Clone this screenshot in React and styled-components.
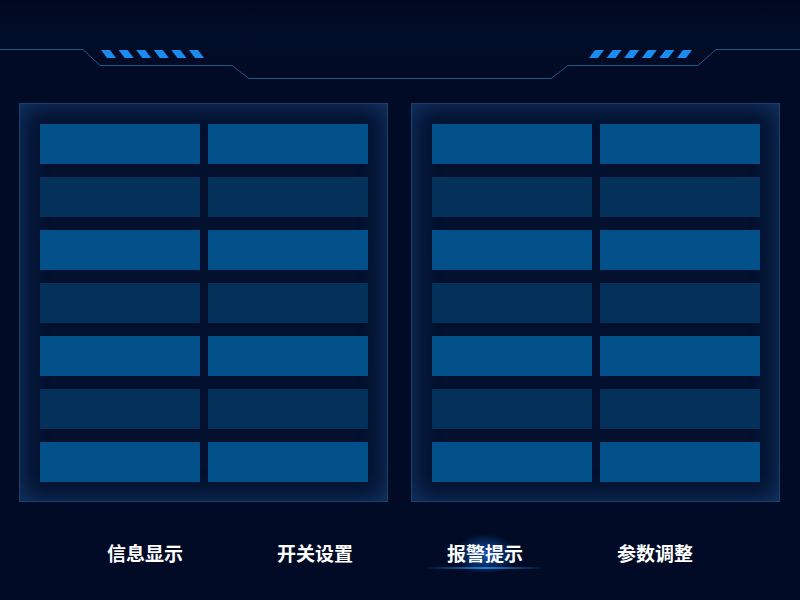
import React from "react";
import styled, { createGlobalStyle } from "styled-components";

const Global = createGlobalStyle`
  html, body { margin: 0; padding: 0; }
  body {
    background: #010b25;
    font-family: "Noto Sans CJK SC", "Noto Sans", sans-serif;
  }
`;

const Page = styled.div`
  width: 800px;
  height: 600px;
  overflow: hidden;
  display: flex;
  flex-direction: column;
  background: linear-gradient(to bottom, #000820 0px, #020f2b 48px, #010b25 49px, #010b25 100%);
`;

const Header = styled.div`
  height: 80px;
  flex: none;
`;

const HeaderSvg = styled.svg`
  display: block;
`;

const Panels = styled.div`
  display: flex;
  gap: 23px;
  padding: 23px 20px 0 19px;
`;

const Panel = styled.div`
  width: 369px;
  height: 399px;
  box-sizing: border-box;
  border: 1px solid #1d4066;
  background: #03112f;
  box-shadow: inset 0 0 26px rgba(34, 92, 160, 0.55);
  padding: 20px 20px 19px 20px;
  display: grid;
  grid-template-columns: 160px 160px;
  grid-template-rows: repeat(7, 40px);
  column-gap: 8px;
  row-gap: 13px;
  align-content: start;
`;

const Cell = styled.div`
  background: ${(p) => (p.$bright ? "#01508a" : "#03315a")};
`;

const Tabs = styled.div`
  display: flex;
  justify-content: center;
  margin-top: 28px;
`;

const Tab = styled.div`
  position: relative;
  width: 170px;
  height: 44px;
  display: flex;
  align-items: center;
  justify-content: center;
  color: #ffffff;
  font-size: 19px;
  font-weight: 700;
  z-index: 0;
  ${(p) =>
    p.$active &&
    `
    &::before {
      content: "";
      position: absolute;
      left: 30px; right: 30px; top: -4px; bottom: 2px;
      background: radial-gradient(ellipse 38% 60% at 50% 62%, rgba(24, 116, 230, 0.7), rgba(20, 110, 220, 0) 75%);
      z-index: -1;
    }
    &::after {
      content: "";
      position: absolute;
      left: 25px; right: 25px; bottom: 5px; height: 2px;
      background: linear-gradient(to right, rgba(30,130,230,0), #1c7fd8 50%, rgba(30,130,230,0));
    }
  `}
`;

const LINE = "#1c5a7c";
const STRIPE = "#1a8cf0";

function Stripes({ x, dir }) {
  const items = [];
  for (let i = 0; i < 6; i++) {
    const x0 = x + i * 17.6;
    const pts =
      dir === "left"
        ? `${x0},50 ${x0 + 9},50 ${x0 + 15},58 ${x0 + 6},58`
        : `${x0 + 6},50 ${x0 + 15},50 ${x0 + 9},58 ${x0},58`;
    items.push(<polygon key={i} points={pts} fill={STRIPE} />);
  }
  return <g>{items}</g>;
}

const rows = [true, false, true, false, true, false, true];

function PanelGrid() {
  return (
    <Panel>
      {rows.map((b, i) => (
        <React.Fragment key={i}>
          <Cell $bright={b} />
          <Cell $bright={b} />
        </React.Fragment>
      ))}
    </Panel>
  );
}

export default function App() {
  const tabs = ["信息显示", "开关设置", "报警提示", "参数调整"];
  return (
    <>
      <Global />
      <Page>
        <Header>
          <HeaderSvg width="800" height="80" viewBox="0 0 800 80">
            <polyline
              points="0,49.5 83,49.5 100,65.5 232,65.5 249,78.5 551,78.5 568,65.5 698,65.5 716,49.5 800,49.5"
              fill="none"
              stroke={LINE}
              strokeWidth="1"
            />
            <Stripes x={101} dir="left" />
            <Stripes x={589} dir="right" />
          </HeaderSvg>
        </Header>
        <Panels>
          <PanelGrid />
          <PanelGrid />
        </Panels>
        <Tabs>
          {tabs.map((t, i) => (
            <Tab key={t} $active={i === 2}>
              {t}
            </Tab>
          ))}
        </Tabs>
      </Page>
    </>
  );
}
